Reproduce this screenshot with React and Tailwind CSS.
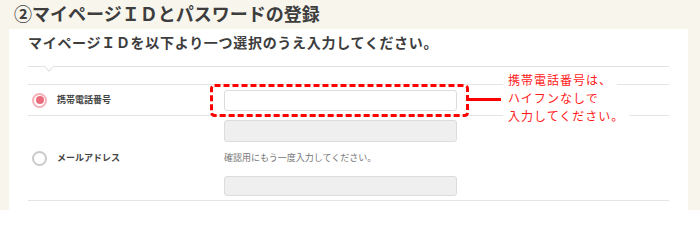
export default function App() {
  return (
    <div
      className="w-[700px] h-[210px] overflow-hidden bg-[#f8f5ed] text-[#3d3d3d]"
      style={{ fontFamily: '"Noto Sans CJK JP", "Noto Sans", sans-serif' }}
    >
      <h1 className="h-[29px] pl-[14px] text-[18px] font-bold leading-[26px]">
        ②マイページＩＤとパスワードの登録
      </h1>

      <div className="relative ml-[9px] w-[679px] h-[200px] bg-white px-[19px]">
        <div className="h-[37px] pt-[3px] text-[14px] font-bold leading-[20px] tracking-[0.7px]">
          マイページＩＤを以下より一つ選択のうえ入力してください。
        </div>

        {/* divider with pointer */}
        <div className="relative h-[18px] border-t border-[#e2e2e2]">
          <div className="absolute left-[17px] top-[-5px] w-[8px] h-[8px] rotate-45 bg-white border-r border-b border-[#e2e2e2]" />
        </div>

        {/* phone row */}
        <div className="relative grid grid-cols-[196px_1fr] items-center h-[32px] border-t border-b border-[#e4e4e4]">
          <div className="flex items-center gap-[10px] pl-[4px]">
            <span className="flex items-center justify-center w-[15px] h-[15px] rounded-full border-2 border-[#f5b0b8]">
              <span className="w-[8px] h-[8px] rounded-full bg-[#ea6c7c]" />
            </span>
            <span className="text-[9px] font-bold text-[#444]">携帯電話番号</span>
          </div>
          <div className="relative w-[233px]">
            <div className="h-[21px] rounded-[3px] border border-[#dcdcdc] bg-white" />
            <svg className="absolute left-[-14px] top-[-6px]" width="259" height="33" viewBox="0 0 259 33">
              <rect x="1.5" y="1.5" width="256" height="30" rx="3" fill="none" stroke="#ff0000" strokeWidth="3" strokeDasharray="6 3" />
            </svg>
            <div className="absolute left-[244px] top-[8px] w-[33px] h-[3px] bg-[#ff0000]" />
          </div>

          <div className="absolute left-[475px] top-[-14px] flex flex-col items-start text-[12px] leading-[18px] tracking-[1px] text-[#ff1a1a]">
            <span className="bg-white px-[5px]">携帯電話番号は、</span>
            <span className="bg-white px-[5px]">ハイフンなしで</span>
            <span className="bg-white px-[5px]">入力してください。</span>
          </div>
        </div>

        {/* confirm + mail */}
        <div className="grid grid-cols-[196px_1fr] pt-[4px] pb-[4px] border-b border-[#e4e4e4]">
          <div />
          <div className="w-[233px] h-[22px] rounded-[3px] border border-[#dcdcdc] bg-[#efefef]" />
          <div className="flex items-center gap-[10px] pl-[4px] h-[32px]">
            <span className="w-[15px] h-[15px] rounded-full border-2 border-[#cacaca] bg-white" />
            <span className="text-[9px] font-bold text-[#444]">メールアドレス</span>
          </div>
          <div className="flex items-center h-[32px] text-[9px] text-[#777]">
            確認用にもう一度入力してください。
          </div>
          <div />
          <div className="mt-[2px] w-[233px] h-[20px] rounded-[3px] border border-[#dcdcdc] bg-[#efefef]" />
        </div>
      </div>
    </div>
  );
}
